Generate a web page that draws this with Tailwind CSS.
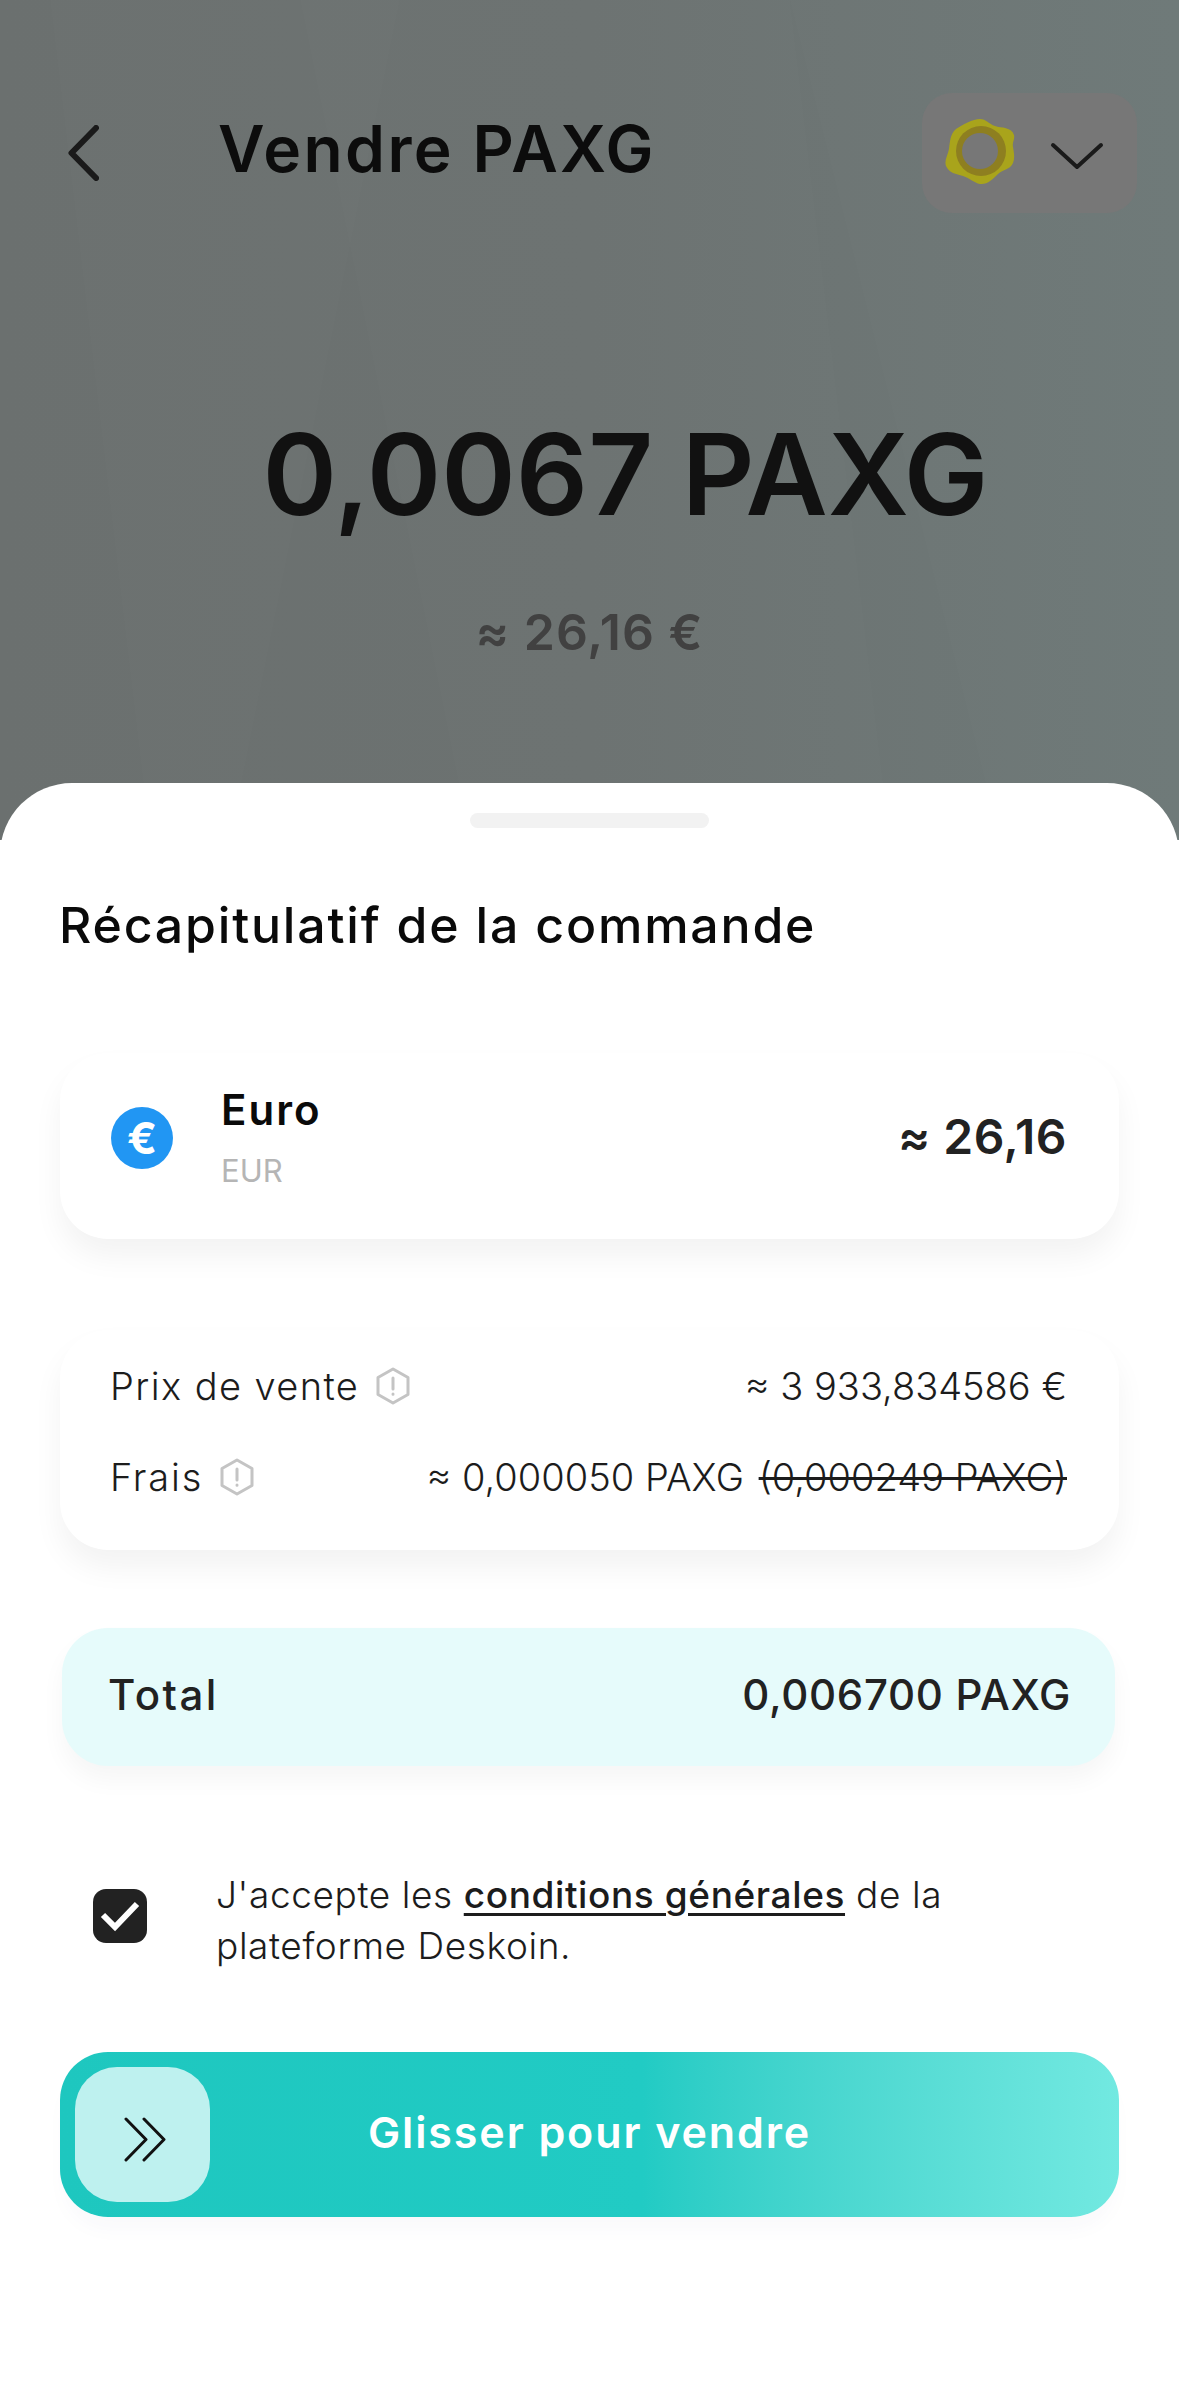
<!DOCTYPE html>
<html lang="fr">
<head>
  <meta charset="UTF-8" />
  <title>Vendre PAXG</title>
  <script src="https://cdn.jsdelivr.net/npm/@tailwindcss/browser@4"></script>
</head>
<body class="font-['Inter',sans-serif] bg-white">
  <div class="relative w-[1179px] h-[2397px] overflow-hidden bg-white">

    <!-- Dimmed screen behind the sheet -->
    <div class="relative h-[840px] bg-linear-to-r from-[#6b706f] via-[#6c7271] to-[#6e7978]">
      <svg class="absolute inset-0" width="1179" height="840" viewBox="0 0 1179 840" fill="#ffffff">
        <polygon points="50,0 400,0 230,840 150,840" opacity="0.008"/>
        <polygon points="300,0 790,0 890,840 470,840" opacity="0.008"/>
        <polygon points="790,0 1179,0 1179,840 1000,840" opacity="0.01"/>
      </svg>

      <div class="relative flex h-[120px] translate-y-[93px] pl-[68px] pr-[42px] items-center">
        <svg width="31" height="56" viewBox="0 0 31 56" fill="none" stroke="#1a1a1a" stroke-width="6" stroke-linecap="round" stroke-linejoin="round"><path d="M28 3 3.500 28 28 53"/></svg>
        <h1 class="ml-[119px] -mt-[8px] text-[64px] leading-none font-semibold tracking-[2.4px] text-[#0c0c0c]">Vendre PAXG</h1>
        <div class="ml-auto flex items-center w-[215px] h-[120px] pl-[23px] rounded-[30px] bg-[#777777]">
          <svg width="70" height="70" viewBox="0 0 70 70">
            <path d="M35 1C41 1 44 6 50 8 56 10 67 9 69 17 70 22 67 24 68 29 69 35 70 40 68 45 65 52 58 51 53 56 48 61 42 67 35 66 29 65 25 60 18 58 11 56 4 55 1 48-1 42 3 37 4 31 5 24 5 16 11 11 17 7 28 1 35 1Z" fill="#a9a41b"/>
            <circle cx="36" cy="33" r="25" fill="#8e7f20"/>
            <circle cx="35" cy="33" r="18" fill="#777777"/>
          </svg>
          <svg class="ml-[34px] mt-[6px]" width="56" height="30" viewBox="0 0 56 30" fill="none" stroke="#1a1a1a" stroke-width="4" stroke-linecap="round" stroke-linejoin="round"><path d="M4 4 28 26 52 4"/></svg>
        </div>
      </div>
    </div>

    <!-- Amount -->
    <div class="absolute top-[418px] inset-x-0 flex flex-col items-center">
      <p class="ml-[72px] text-[113px] leading-none font-semibold text-[#111111]">0,0067 PAXG</p>
      <p class="mt-[76px] text-[50px] leading-none font-semibold tracking-[1px] text-[#414141]">≈ 26,16 €</p>
    </div>

    <!-- Bottom sheet -->
    <div class="absolute top-[783px] inset-x-0 bottom-0 rounded-t-[72px] bg-white px-[60px] pt-[30px]">
      <div class="mx-auto w-[239px] h-[15px] rounded-full bg-[#f2f2f2]"></div>

      <h2 class="mt-[72px] -ml-[1px] text-[50px] leading-none font-medium tracking-[1.8px] text-[#0a0a0a]">Récapitulatif de la commande</h2>

      <div class="mt-[103px] h-[186px] rounded-[48px] bg-white shadow-[0_18px_30px_rgba(0,0,0,0.05)] flex items-start pl-[51px] pr-[52px] pt-[36px]">
        <div class="mt-[18px] w-[62px] h-[62px] rounded-full bg-[#2196f3] flex items-center justify-center text-white text-[44px] font-bold leading-none">€</div>
        <div class="ml-[48px]">
          <p class="text-[42px] leading-none font-semibold tracking-[2px] text-[#0a0a0a]">Euro</p>
          <p class="mt-[24px] text-[31px] leading-none text-[#b5b5b5]">EUR</p>
        </div>
        <p class="ml-auto mt-[24px] text-[48px] leading-none font-semibold tracking-[0.5px] text-[#222222]">≈ 26,16</p>
      </div>

      <div class="mt-[91px] h-[220px] rounded-[48px] bg-white shadow-[0_18px_30px_rgba(0,0,0,0.05)] pl-[50px] pr-[52px] pt-[37px] text-[38px] leading-none text-[#1c1c1c]">
        <div class="flex items-center justify-between">
          <div class="flex items-center gap-[16px]">
            <span class="font-light tracking-[1.4px]">Prix de vente</span>
            <svg width="36" height="38" viewBox="0 0 36 38" fill="none" stroke="#c4c4c4" stroke-width="3" stroke-linecap="round" stroke-linejoin="round"><path d="M18 2 33 10.500V27.500L18 36 3 27.500V10.500Z"/><path d="M18 11V22M18 27V27.200"/></svg>
          </div>
          <span class="font-light">≈ 3 933,834586 €</span>
        </div>
        <div class="mt-[53px] flex items-center justify-between">
          <div class="flex items-center gap-[16px]">
            <span class="font-light tracking-[1.8px]">Frais</span>
            <svg width="36" height="38" viewBox="0 0 36 38" fill="none" stroke="#c4c4c4" stroke-width="3" stroke-linecap="round" stroke-linejoin="round"><path d="M18 2 33 10.500V27.500L18 36 3 27.500V10.500Z"/><path d="M18 11V22M18 27V27.200"/></svg>
          </div>
          <span class="font-light">≈ 0,000050 PAXG <span class="ml-[4px] line-through">(0,000249 PAXG)</span></span>
        </div>
      </div>

      <div class="mt-[78px] ml-[2px] mr-[4px] h-[138px] rounded-[46px] bg-[#e6fbfb] shadow-[0_14px_24px_rgba(0,0,0,0.04)] flex items-center justify-between pl-[46px] pr-[44px] pb-[4px] text-[42px] leading-none font-medium text-[#222222]">
        <span class="tracking-[2.5px]">Total</span>
        <span class="tracking-[0.7px]">0,006700 PAXG</span>
      </div>

      <div class="mt-[103px] flex items-start pl-[33px]">
        <div class="mt-[20px] shrink-0 w-[54px] h-[54px] rounded-[13px] bg-[#222222] flex items-center justify-center">
          <svg width="42" height="34" viewBox="0 0 42 34" fill="none" stroke="#ffffff" stroke-width="6"><path d="M4 16 16 28 38 5"/></svg>
        </div>
        <p class="ml-[69px] w-[800px] text-[37px] leading-[51px] font-light tracking-[0.6px] text-[#1c1c1c]">J'accepte les <a class="font-medium underline underline-offset-[5px] decoration-[3px]">conditions générales</a> de la plateforme Deskoin.</p>
      </div>

      <div class="relative mt-[81px] h-[165px] rounded-[48px] bg-linear-to-r from-[#1ec7bf] via-[#21cbc4] via-55% to-[#72e9e1] shadow-[0_16px_24px_-8px_rgba(60,60,120,0.04)] flex items-center justify-center">
        <div class="absolute left-[15px] top-[15px] w-[135px] h-[135px] rounded-[42px] bg-[#bef1ef] flex items-center justify-center">
          <svg class="ml-[5px] mt-[10px]" width="42" height="45" viewBox="0 0 42 45" fill="none" stroke="#111111" stroke-width="3" stroke-linecap="round" stroke-linejoin="round"><path d="M2 2 22 22.500 2 43M20 2 40 22.500 20 43"/></svg>
        </div>
        <span class="-mt-[4px] text-[43px] leading-none font-semibold tracking-[1.9px] text-white">Glisser pour vendre</span>
      </div>
    </div>
  </div>
</body>
</html>
